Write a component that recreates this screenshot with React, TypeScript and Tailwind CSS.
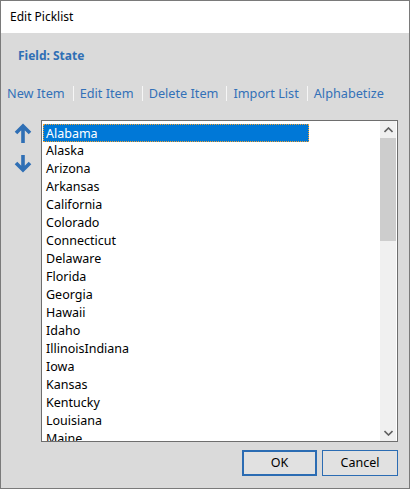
import React from "react"

const states = [
  "Alabama",
  "Alaska",
  "Arizona",
  "Arkansas",
  "California",
  "Colorado",
  "Connecticut",
  "Delaware",
  "Florida",
  "Georgia",
  "Hawaii",
  "Idaho",
  "IllinoisIndiana",
  "Iowa",
  "Kansas",
  "Kentucky",
  "Louisiana",
  "Maine",
]

const actions = ["New Item", "Edit Item", "Delete Item", "Import List", "Alphabetize"]

function ArrowUp() {
  return (
    <svg width="18" height="20" viewBox="0 0 18 20">
      <path d="M9 3 V20 M2 10 L9 3 L16 10" fill="none" stroke="#2f6fb5" strokeWidth="3.6" />
    </svg>
  )
}

function ArrowDown() {
  return (
    <svg width="18" height="18" viewBox="0 0 18 18">
      <path d="M9 0 V15 M2 8 L9 15 L16 8" fill="none" stroke="#2f6fb5" strokeWidth="3.6" />
    </svg>
  )
}

export default function App() {
  return (
    <div
      className="w-[411px] h-[490px] bg-white"
      style={{ fontFamily: '"Noto Sans", "Open Sans", sans-serif' }}
    >
      <div className="w-[410px] h-[489px] border border-[#7a7a7a] flex flex-col bg-[#dadada]">
        {/* title bar */}
        <div className="h-[32px] bg-white flex items-center pl-[9px] text-[12px] text-black">Edit Picklist</div>

        {/* field label */}
        <div className="h-[44px] flex items-center pl-[17px] pt-[1px] text-[12px] font-bold text-[#2f6fb5]">
          Field: State
        </div>

        {/* toolbar */}
        <div className="h-[33px] flex items-center pl-[6px] text-[12.7px] text-[#3371b8]">
          {actions.map((a, i) => (
            <React.Fragment key={a}>
              {i > 0 && <span className="w-px h-[15px] bg-[#f6f6f6] ml-[8px] mr-[6px]" />}
              <span>{a}</span>
            </React.Fragment>
          ))}
        </div>

        <div className="flex pt-[10px]">
          {/* move arrows */}
          <div className="w-[40px] flex flex-col items-start pl-[13px] pt-[3px] gap-[12px]">
            <ArrowUp />
            <ArrowDown />
          </div>

          {/* list box */}
          <div className="w-[357px] h-[322px] border border-[#6e6e6e] bg-white flex overflow-hidden">
            <div className="flex-1 pt-[3px] pl-[1px] overflow-hidden">
              {states.map((s, i) =>
                i === 0 ? (
                  <div
                    key={s}
                    className="w-[266px] h-[18px] bg-[#0078d7] text-white text-[12.5px] leading-[17px] pl-[2px] border border-dotted border-[#f0a030]"
                  >
                    {s}
                  </div>
                ) : (
                  <div key={s} className="h-[18px] text-[12.5px] leading-[18px] pl-[3px] text-black">
                    {s}
                  </div>
                )
              )}
            </div>
            {/* scrollbar */}
            <div className="w-[16px] mr-[1px] bg-[#f0f0f0] flex flex-col">
              <div className="h-[17px] flex items-center justify-center">
                <svg width="9" height="6" viewBox="0 0 9 6">
                  <path d="M0.5 5 L4.5 1 L8.5 5" fill="none" stroke="#606060" strokeWidth="1.6" />
                </svg>
              </div>
              <div className="h-[103px] bg-[#cdcdcd]" />
              <div className="flex-1" />
              <div className="h-[17px] flex items-center justify-center">
                <svg width="9" height="6" viewBox="0 0 9 6">
                  <path d="M0.5 1 L4.5 5 L8.5 1" fill="none" stroke="#606060" strokeWidth="1.6" />
                </svg>
              </div>
            </div>
          </div>
        </div>

        {/* buttons */}
        <div className="flex justify-end gap-[5px] pr-[11px] pt-[8px]">
          <button className="w-[75px] h-[26px] border-2 border-[#2b6cb3] bg-[#e1e1e1] text-[12.5px] text-black">
            OK
          </button>
          <button className="w-[76px] h-[26px] border border-[#2b6cb3] bg-[#e1e1e1] text-[12.5px] text-black">
            Cancel
          </button>
        </div>
      </div>
    </div>
  )
}
